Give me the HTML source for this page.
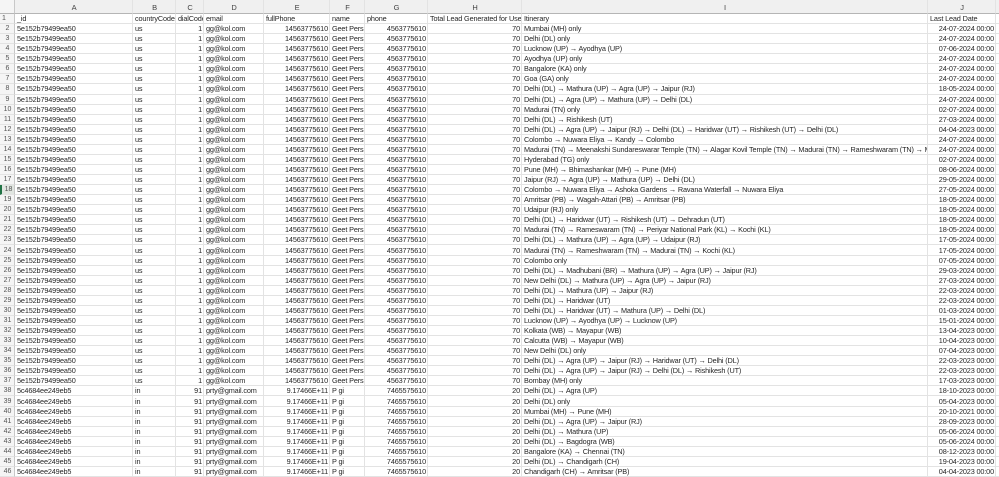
<!DOCTYPE html>
<html><head><meta charset="utf-8"><style>
html,body{margin:0;padding:0;background:#fff;width:999px;height:477px;overflow:hidden}
.g{display:grid;width:999px;height:477px;grid-template-columns:15px 118px 43px 28px 60px 66px 35px 63px 94px 406px 68px 3px;grid-template-rows:14px repeat(46,1fr);font-family:"Liberation Sans",sans-serif;font-size:7.3px;letter-spacing:-0.15px;color:#262626}
.r{display:contents}
.r>div{box-sizing:border-box;border-right:1px solid #e3e3e3;border-bottom:1px solid #e3e3e3;white-space:nowrap;overflow:hidden;padding:0 1px 0 2px;display:flex;align-items:center;line-height:9px}
.r>div:nth-child(1){background:#f5f5f5;color:#555;justify-content:center;border-right:1px solid #c8c8c8;font-size:7px;letter-spacing:0}
.r>div:nth-child(4),.r>div:nth-child(6),.r>div:nth-child(8),.r>div:nth-child(9),.r>div:nth-child(11){justify-content:flex-end}
.h>div{background:#f0f0f0;justify-content:center!important;border-bottom:1px solid #b5b5b5;color:#444;font-size:7.5px;padding-top:2px}
.f>div{justify-content:flex-start!important}
.r>div:nth-child(12){border-right:none}
.s>div:nth-child(1){background:#e1e6e1;border-left:2px solid #217346}
</style></head><body><div class="g">
<div class="r h"><div></div><div>A</div><div>B</div><div>C</div><div>D</div><div>E</div><div>F</div><div>G</div><div>H</div><div>I</div><div>J</div><div></div></div>
<div class="r f"><div>1</div><div>_id</div><div>countryCode</div><div>dialCode</div><div>email</div><div>fullPhone</div><div>name</div><div>phone</div><div>Total Lead Generated for User</div><div>Itinerary</div><div>Last Lead Date</div><div></div></div>
<div class="r"><div>2</div><div>5e152b79499ea50</div><div>us</div><div>1</div><div>gg@kol.com</div><div>14563775610</div><div>Geet Pers</div><div>4563775610</div><div>70</div><div>Mumbai (MH) only</div><div>24-07-2024 00:00</div><div></div></div>
<div class="r"><div>3</div><div>5e152b79499ea50</div><div>us</div><div>1</div><div>gg@kol.com</div><div>14563775610</div><div>Geet Pers</div><div>4563775610</div><div>70</div><div>Delhi (DL) only</div><div>24-07-2024 00:00</div><div></div></div>
<div class="r"><div>4</div><div>5e152b79499ea50</div><div>us</div><div>1</div><div>gg@kol.com</div><div>14563775610</div><div>Geet Pers</div><div>4563775610</div><div>70</div><div>Lucknow (UP) → Ayodhya (UP)</div><div>07-06-2024 00:00</div><div></div></div>
<div class="r"><div>5</div><div>5e152b79499ea50</div><div>us</div><div>1</div><div>gg@kol.com</div><div>14563775610</div><div>Geet Pers</div><div>4563775610</div><div>70</div><div>Ayodhya (UP) only</div><div>24-07-2024 00:00</div><div></div></div>
<div class="r"><div>6</div><div>5e152b79499ea50</div><div>us</div><div>1</div><div>gg@kol.com</div><div>14563775610</div><div>Geet Pers</div><div>4563775610</div><div>70</div><div>Bangalore (KA) only</div><div>24-07-2024 00:00</div><div></div></div>
<div class="r"><div>7</div><div>5e152b79499ea50</div><div>us</div><div>1</div><div>gg@kol.com</div><div>14563775610</div><div>Geet Pers</div><div>4563775610</div><div>70</div><div>Goa (GA) only</div><div>24-07-2024 00:00</div><div></div></div>
<div class="r"><div>8</div><div>5e152b79499ea50</div><div>us</div><div>1</div><div>gg@kol.com</div><div>14563775610</div><div>Geet Pers</div><div>4563775610</div><div>70</div><div>Delhi (DL) → Mathura (UP) → Agra (UP) → Jaipur (RJ)</div><div>18-05-2024 00:00</div><div></div></div>
<div class="r"><div>9</div><div>5e152b79499ea50</div><div>us</div><div>1</div><div>gg@kol.com</div><div>14563775610</div><div>Geet Pers</div><div>4563775610</div><div>70</div><div>Delhi (DL) → Agra (UP) → Mathura (UP) → Delhi (DL)</div><div>24-07-2024 00:00</div><div></div></div>
<div class="r"><div>10</div><div>5e152b79499ea50</div><div>us</div><div>1</div><div>gg@kol.com</div><div>14563775610</div><div>Geet Pers</div><div>4563775610</div><div>70</div><div>Madurai (TN) only</div><div>02-07-2024 00:00</div><div></div></div>
<div class="r"><div>11</div><div>5e152b79499ea50</div><div>us</div><div>1</div><div>gg@kol.com</div><div>14563775610</div><div>Geet Pers</div><div>4563775610</div><div>70</div><div>Delhi (DL) → Rishikesh (UT)</div><div>27-03-2024 00:00</div><div></div></div>
<div class="r"><div>12</div><div>5e152b79499ea50</div><div>us</div><div>1</div><div>gg@kol.com</div><div>14563775610</div><div>Geet Pers</div><div>4563775610</div><div>70</div><div>Delhi (DL) → Agra (UP) → Jaipur (RJ) → Delhi (DL) → Haridwar (UT) → Rishikesh (UT) → Delhi (DL)</div><div>04-04-2023 00:00</div><div></div></div>
<div class="r"><div>13</div><div>5e152b79499ea50</div><div>us</div><div>1</div><div>gg@kol.com</div><div>14563775610</div><div>Geet Pers</div><div>4563775610</div><div>70</div><div>Colombo → Nuwara Eliya → Kandy → Colombo</div><div>24-07-2024 00:00</div><div></div></div>
<div class="r"><div>14</div><div>5e152b79499ea50</div><div>us</div><div>1</div><div>gg@kol.com</div><div>14563775610</div><div>Geet Pers</div><div>4563775610</div><div>70</div><div>Madurai (TN) → Meenakshi Sundareswarar Temple (TN) → Alagar Kovil Temple (TN) → Madurai (TN) → Rameshwaram (TN) → Madurai (TN)</div><div>24-07-2024 00:00</div><div></div></div>
<div class="r"><div>15</div><div>5e152b79499ea50</div><div>us</div><div>1</div><div>gg@kol.com</div><div>14563775610</div><div>Geet Pers</div><div>4563775610</div><div>70</div><div>Hyderabad (TG) only</div><div>02-07-2024 00:00</div><div></div></div>
<div class="r"><div>16</div><div>5e152b79499ea50</div><div>us</div><div>1</div><div>gg@kol.com</div><div>14563775610</div><div>Geet Pers</div><div>4563775610</div><div>70</div><div>Pune (MH) → Bhimashankar (MH) → Pune (MH)</div><div>08-06-2024 00:00</div><div></div></div>
<div class="r"><div>17</div><div>5e152b79499ea50</div><div>us</div><div>1</div><div>gg@kol.com</div><div>14563775610</div><div>Geet Pers</div><div>4563775610</div><div>70</div><div>Jaipur (RJ) → Agra (UP) → Mathura (UP) → Delhi (DL)</div><div>29-05-2024 00:00</div><div></div></div>
<div class="r s"><div>18</div><div>5e152b79499ea50</div><div>us</div><div>1</div><div>gg@kol.com</div><div>14563775610</div><div>Geet Pers</div><div>4563775610</div><div>70</div><div>Colombo → Nuwara Eliya → Ashoka Gardens → Ravana Waterfall → Nuwara Eliya</div><div>27-05-2024 00:00</div><div></div></div>
<div class="r"><div>19</div><div>5e152b79499ea50</div><div>us</div><div>1</div><div>gg@kol.com</div><div>14563775610</div><div>Geet Pers</div><div>4563775610</div><div>70</div><div>Amritsar (PB) → Wagah-Attari (PB) → Amritsar (PB)</div><div>18-05-2024 00:00</div><div></div></div>
<div class="r"><div>20</div><div>5e152b79499ea50</div><div>us</div><div>1</div><div>gg@kol.com</div><div>14563775610</div><div>Geet Pers</div><div>4563775610</div><div>70</div><div>Udaipur (RJ) only</div><div>18-05-2024 00:00</div><div></div></div>
<div class="r"><div>21</div><div>5e152b79499ea50</div><div>us</div><div>1</div><div>gg@kol.com</div><div>14563775610</div><div>Geet Pers</div><div>4563775610</div><div>70</div><div>Delhi (DL) → Haridwar (UT) → Rishikesh (UT) → Dehradun (UT)</div><div>18-05-2024 00:00</div><div></div></div>
<div class="r"><div>22</div><div>5e152b79499ea50</div><div>us</div><div>1</div><div>gg@kol.com</div><div>14563775610</div><div>Geet Pers</div><div>4563775610</div><div>70</div><div>Madurai (TN) → Rameswaram (TN) → Periyar National Park (KL) → Kochi (KL)</div><div>18-05-2024 00:00</div><div></div></div>
<div class="r"><div>23</div><div>5e152b79499ea50</div><div>us</div><div>1</div><div>gg@kol.com</div><div>14563775610</div><div>Geet Pers</div><div>4563775610</div><div>70</div><div>Delhi (DL) → Mathura (UP) → Agra (UP) → Udaipur (RJ)</div><div>17-05-2024 00:00</div><div></div></div>
<div class="r"><div>24</div><div>5e152b79499ea50</div><div>us</div><div>1</div><div>gg@kol.com</div><div>14563775610</div><div>Geet Pers</div><div>4563775610</div><div>70</div><div>Madurai (TN) → Rameshwaram (TN) → Madurai (TN) → Kochi (KL)</div><div>17-05-2024 00:00</div><div></div></div>
<div class="r"><div>25</div><div>5e152b79499ea50</div><div>us</div><div>1</div><div>gg@kol.com</div><div>14563775610</div><div>Geet Pers</div><div>4563775610</div><div>70</div><div>Colombo only</div><div>07-05-2024 00:00</div><div></div></div>
<div class="r"><div>26</div><div>5e152b79499ea50</div><div>us</div><div>1</div><div>gg@kol.com</div><div>14563775610</div><div>Geet Pers</div><div>4563775610</div><div>70</div><div>Delhi (DL) → Madhubani (BR) → Mathura (UP) → Agra (UP) → Jaipur (RJ)</div><div>29-03-2024 00:00</div><div></div></div>
<div class="r"><div>27</div><div>5e152b79499ea50</div><div>us</div><div>1</div><div>gg@kol.com</div><div>14563775610</div><div>Geet Pers</div><div>4563775610</div><div>70</div><div>New Delhi (DL) → Mathura (UP) → Agra (UP) → Jaipur (RJ)</div><div>27-03-2024 00:00</div><div></div></div>
<div class="r"><div>28</div><div>5e152b79499ea50</div><div>us</div><div>1</div><div>gg@kol.com</div><div>14563775610</div><div>Geet Pers</div><div>4563775610</div><div>70</div><div>Delhi (DL) → Mathura (UP) → Jaipur (RJ)</div><div>22-03-2024 00:00</div><div></div></div>
<div class="r"><div>29</div><div>5e152b79499ea50</div><div>us</div><div>1</div><div>gg@kol.com</div><div>14563775610</div><div>Geet Pers</div><div>4563775610</div><div>70</div><div>Delhi (DL) → Haridwar (UT)</div><div>22-03-2024 00:00</div><div></div></div>
<div class="r"><div>30</div><div>5e152b79499ea50</div><div>us</div><div>1</div><div>gg@kol.com</div><div>14563775610</div><div>Geet Pers</div><div>4563775610</div><div>70</div><div>Delhi (DL) → Haridwar (UT) → Mathura (UP) → Delhi (DL)</div><div>01-03-2024 00:00</div><div></div></div>
<div class="r"><div>31</div><div>5e152b79499ea50</div><div>us</div><div>1</div><div>gg@kol.com</div><div>14563775610</div><div>Geet Pers</div><div>4563775610</div><div>70</div><div>Lucknow (UP) → Ayodhya (UP) → Lucknow (UP)</div><div>15-01-2024 00:00</div><div></div></div>
<div class="r"><div>32</div><div>5e152b79499ea50</div><div>us</div><div>1</div><div>gg@kol.com</div><div>14563775610</div><div>Geet Pers</div><div>4563775610</div><div>70</div><div>Kolkata (WB) → Mayapur (WB)</div><div>13-04-2023 00:00</div><div></div></div>
<div class="r"><div>33</div><div>5e152b79499ea50</div><div>us</div><div>1</div><div>gg@kol.com</div><div>14563775610</div><div>Geet Pers</div><div>4563775610</div><div>70</div><div>Calcutta (WB) → Mayapur (WB)</div><div>10-04-2023 00:00</div><div></div></div>
<div class="r"><div>34</div><div>5e152b79499ea50</div><div>us</div><div>1</div><div>gg@kol.com</div><div>14563775610</div><div>Geet Pers</div><div>4563775610</div><div>70</div><div>New Delhi (DL) only</div><div>07-04-2023 00:00</div><div></div></div>
<div class="r"><div>35</div><div>5e152b79499ea50</div><div>us</div><div>1</div><div>gg@kol.com</div><div>14563775610</div><div>Geet Pers</div><div>4563775610</div><div>70</div><div>Delhi (DL) → Agra (UP) → Jaipur (RJ) → Haridwar (UT) → Delhi (DL)</div><div>22-03-2023 00:00</div><div></div></div>
<div class="r"><div>36</div><div>5e152b79499ea50</div><div>us</div><div>1</div><div>gg@kol.com</div><div>14563775610</div><div>Geet Pers</div><div>4563775610</div><div>70</div><div>Delhi (DL) → Agra (UP) → Jaipur (RJ) → Delhi (DL) → Rishikesh (UT)</div><div>22-03-2023 00:00</div><div></div></div>
<div class="r"><div>37</div><div>5e152b79499ea50</div><div>us</div><div>1</div><div>gg@kol.com</div><div>14563775610</div><div>Geet Pers</div><div>4563775610</div><div>70</div><div>Bombay (MH) only</div><div>17-03-2023 00:00</div><div></div></div>
<div class="r"><div>38</div><div>5c4684ee249eb5</div><div>in</div><div>91</div><div>prty@gmail.com</div><div>9.17466E+11</div><div>P gi</div><div>7465575610</div><div>20</div><div>Delhi (DL) → Agra (UP)</div><div>18-10-2023 00:00</div><div></div></div>
<div class="r"><div>39</div><div>5c4684ee249eb5</div><div>in</div><div>91</div><div>prty@gmail.com</div><div>9.17466E+11</div><div>P gi</div><div>7465575610</div><div>20</div><div>Delhi (DL) only</div><div>05-04-2023 00:00</div><div></div></div>
<div class="r"><div>40</div><div>5c4684ee249eb5</div><div>in</div><div>91</div><div>prty@gmail.com</div><div>9.17466E+11</div><div>P gi</div><div>7465575610</div><div>20</div><div>Mumbai (MH) → Pune (MH)</div><div>20-10-2021 00:00</div><div></div></div>
<div class="r"><div>41</div><div>5c4684ee249eb5</div><div>in</div><div>91</div><div>prty@gmail.com</div><div>9.17466E+11</div><div>P gi</div><div>7465575610</div><div>20</div><div>Delhi (DL) → Agra (UP) → Jaipur (RJ)</div><div>28-09-2023 00:00</div><div></div></div>
<div class="r"><div>42</div><div>5c4684ee249eb5</div><div>in</div><div>91</div><div>prty@gmail.com</div><div>9.17466E+11</div><div>P gi</div><div>7465575610</div><div>20</div><div>Delhi (DL) → Mathura (UP)</div><div>05-06-2024 00:00</div><div></div></div>
<div class="r"><div>43</div><div>5c4684ee249eb5</div><div>in</div><div>91</div><div>prty@gmail.com</div><div>9.17466E+11</div><div>P gi</div><div>7465575610</div><div>20</div><div>Delhi (DL) → Bagdogra (WB)</div><div>05-06-2024 00:00</div><div></div></div>
<div class="r"><div>44</div><div>5c4684ee249eb5</div><div>in</div><div>91</div><div>prty@gmail.com</div><div>9.17466E+11</div><div>P gi</div><div>7465575610</div><div>20</div><div>Bangalore (KA) → Chennai (TN)</div><div>08-12-2023 00:00</div><div></div></div>
<div class="r"><div>45</div><div>5c4684ee249eb5</div><div>in</div><div>91</div><div>prty@gmail.com</div><div>9.17466E+11</div><div>P gi</div><div>7465575610</div><div>20</div><div>Delhi (DL) → Chandigarh (CH)</div><div>19-04-2023 00:00</div><div></div></div>
<div class="r"><div>46</div><div>5c4684ee249eb5</div><div>in</div><div>91</div><div>prty@gmail.com</div><div>9.17466E+11</div><div>P gi</div><div>7465575610</div><div>20</div><div>Chandigarh (CH) → Amritsar (PB)</div><div>04-04-2023 00:00</div><div></div></div>
</div></body></html>
